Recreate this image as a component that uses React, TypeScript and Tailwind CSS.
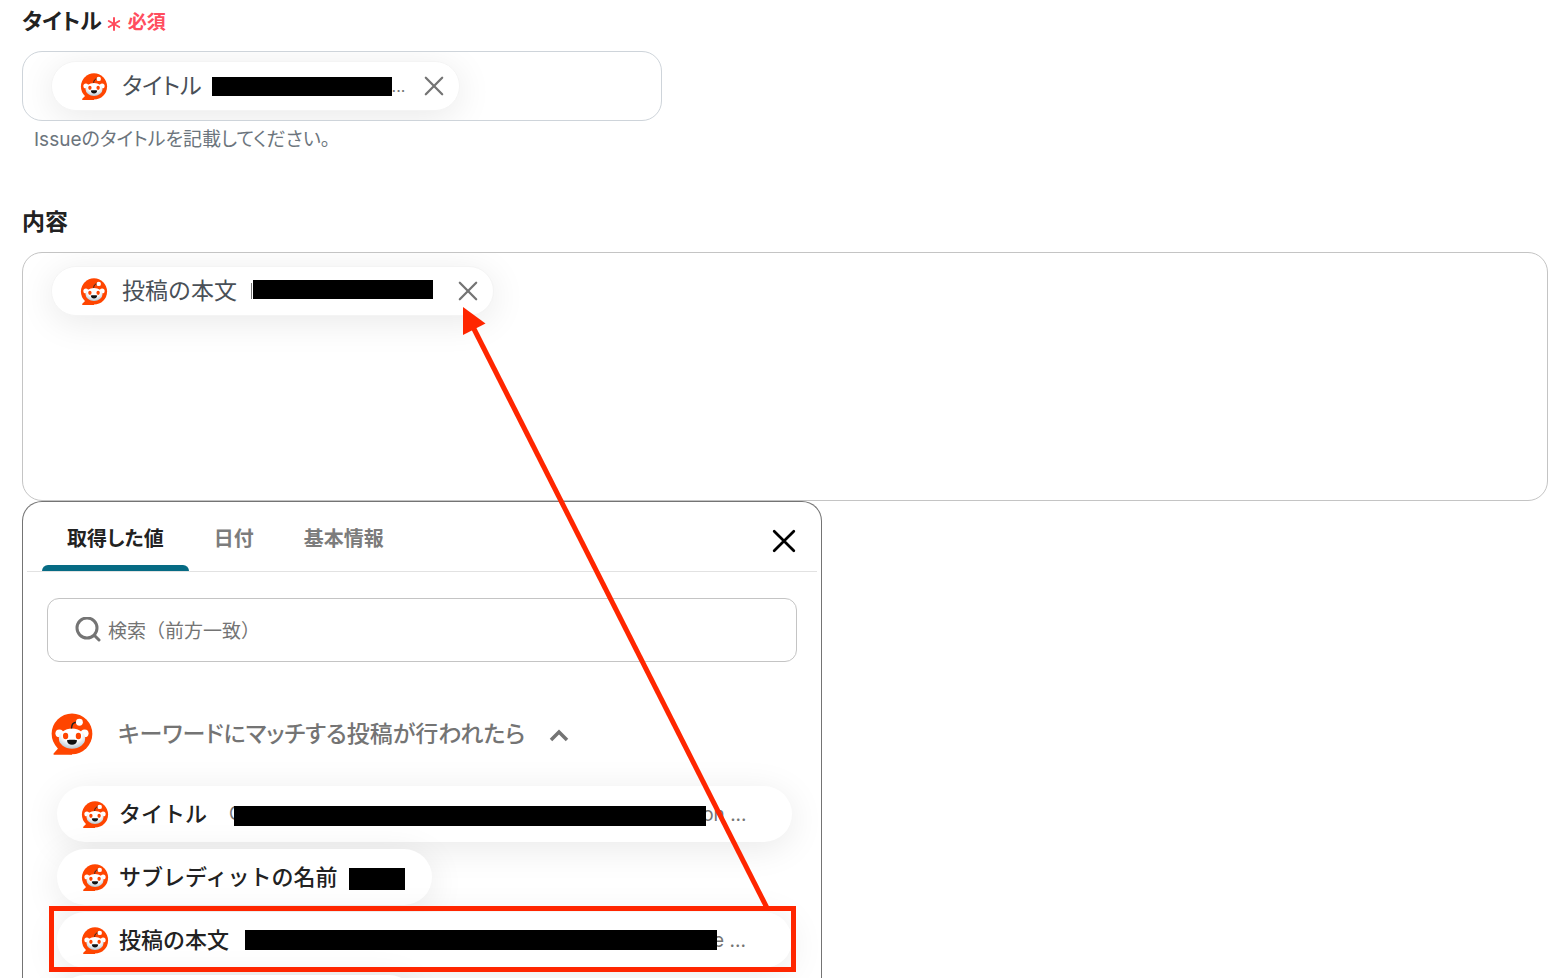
import { useState } from 'react'
import { Asterisk } from 'lucide-react'
import clsx from 'clsx'

interface IconProps {
  className?: string
}

interface ValueRow {
  label: string
  head?: string
  tail?: string
  chipClass: string
  barClass: string
}

const tabs = ['取得した値', '日付', '基本情報']

const rows: ValueRow[] = [
  {
    label: 'タイトル',
    head: 'C',
    tail: 'on ...',
    chipClass: 'w-[735px]',
    barClass: '-ml-2 mt-1 h-5 w-[472px]',
  },
  {
    label: 'サブレディットの名前',
    chipClass: 'w-[375px]',
    barClass: 'ml-3 mt-1 h-[22px] w-14',
  },
  {
    label: '投稿の本文',
    tail: 'e ...',
    chipClass: 'w-[735px]',
    barClass: 'ml-4 h-5 w-[472px]',
  },
]

function RedditIcon({ className }: IconProps) {
  return (
    <svg viewBox="0 0 125 128" className={className} aria-hidden="true">
      <defs>
        <radialGradient id="face" cx="50%" cy="30%" r="75%">
          <stop offset="0.5" stopColor="#ffffff" />
          <stop offset="1" stopColor="#a9bdc9" />
        </radialGradient>
      </defs>
      <circle cx="62.500" cy="63.500" r="62" fill="#ff4500" />
      <path d="M62.500 127.500H9c-3 0-4-3-2-5l13-14L62.500 90Z" fill="#ff4500" />
      <circle cx="24" cy="62" r="12" fill="#fff" />
      <circle cx="101" cy="62" r="12" fill="#fff" />
      <ellipse cx="62.500" cy="78" rx="40" ry="31" fill="url(#face)" />
      <path d="M61 47C61 34 67 28 77 28" fill="none" stroke="#222" strokeWidth="4.500" />
      <circle cx="85" cy="28" r="10.500" fill="#fff" />
      <ellipse cx="43" cy="70" rx="8" ry="10" fill="#ff4500" />
      <ellipse cx="82" cy="70" rx="8" ry="10" fill="#ff4500" />
      <path d="M47 83c10-2 22-2 31 0c-1 9-7 14-15.500 14S48 92 47 83Z" fill="#111" />
    </svg>
  )
}

function CloseIcon({ className }: IconProps) {
  return (
    <svg viewBox="0 0 22 22" className={className} fill="none" stroke="currentColor" strokeWidth="2.500" strokeLinecap="round" aria-hidden="true">
      <path d="M2 2l18 18M20 2L2 20" />
    </svg>
  )
}

function SearchIcon() {
  return (
    <svg viewBox="0 0 26 26" className="size-[26px] shrink-0" fill="none" stroke="#747474" strokeWidth="3" strokeLinecap="round" aria-hidden="true">
      <circle cx="12" cy="11" r="10" />
      <path d="M19.500 18.500l4.500 4.500" />
    </svg>
  )
}

interface TokenProps {
  label: string
  className: string
  children: React.ReactNode
}

function Token({ label, className, children }: TokenProps) {
  return (
    <div
      className={clsx(
        'flex h-[50px] shrink-0 items-center rounded-full border border-[#f4f4f4] bg-white pl-7 shadow-[0_6px_36px_rgba(0,0,0,0.09)]',
        className,
      )}
    >
      <RedditIcon className="h-[27px] w-7 shrink-0" />
      <span className="ml-3.5 text-[23px] leading-8 whitespace-nowrap text-[#495057]">{label}</span>
      {children}
      <button type="button" aria-label={`${label}を削除`} className="mr-[15px] ml-auto">
        <CloseIcon className="size-5 text-[#747474]" />
      </button>
    </div>
  )
}

function ValuePicker() {
  const [active, setActive] = useState(0)
  const [open, setOpen] = useState(true)

  return (
    <section className="max-w-[800px] rounded-t-[20px] border border-b-0 border-[#747474] bg-white pb-10">
      <div className="mx-1 flex h-[70px] items-stretch border-b border-[#e2e2e2] pr-[21px] pl-[15px]">
        <div role="tablist" className="flex [font-feature-settings:'palt']">
          {tabs.map((tab, idx) => (
            <button
              key={tab}
              type="button"
              role="tab"
              aria-selected={idx === active}
              onClick={() => setActive(idx)}
              className="flex flex-col justify-end"
            >
              <span
                className={clsx(
                  'px-[25px] pb-2.5 text-xl leading-8 font-bold',
                  idx === active ? 'text-[#222222]' : 'text-[#7c7c7c]',
                )}
              >
                {tab}
              </span>
              <span className={clsx('h-1.5 w-full rounded-t-md', idx === active && 'bg-[#066b84]')} />
            </button>
          ))}
        </div>
        <button type="button" aria-label="閉じる" className="mt-2 ml-auto">
          <CloseIcon className="size-6 text-black" />
        </button>
      </div>

      <div className="px-6 pt-[26px]">
        <label className="flex h-16 items-center gap-[7px] rounded-xl border border-[#c4c4c4] px-[27px]">
          <SearchIcon />
          <input
            type="text"
            aria-label="検索"
            placeholder="検索（前方一致）"
            className="min-w-0 flex-1 pt-1 text-[19px] leading-8 outline-none placeholder:text-[#747474]"
          />
        </label>

        <button
          type="button"
          aria-expanded={open}
          onClick={() => setOpen(!open)}
          className="mt-[51px] ml-1 flex items-center"
        >
          <RedditIcon className="size-[42px]" />
          <span className="ml-[25px] text-[23px] leading-8 font-medium text-[#747474] [font-feature-settings:'palt']">
            キーワードにマッチする投稿が行われたら
          </span>
          <svg viewBox="0 0 20 14" className="mt-0.5 ml-6 h-3.5 w-5" fill="none" stroke="#747474" strokeWidth="3.500" aria-hidden="true">
            <path d="M2 12l8-8 8 8" />
          </svg>
        </button>

        {open && (
          <ul className="mt-[31px] ml-2.5 flex flex-col gap-[7px]">
            {rows.map((row) => (
              <li key={row.label}>
                <button
                  type="button"
                  className={clsx(
                    'flex h-14 max-w-full items-center rounded-full bg-white pl-6 text-left shadow-[0_6px_36px_rgba(0,0,0,0.09)]',
                    row.chipClass,
                  )}
                >
                  <RedditIcon className="h-[27px] w-7 shrink-0" />
                  <span className="ml-2.5 text-[22px] leading-8 font-medium whitespace-nowrap text-[#222222]">
                    {row.label}
                  </span>
                  {row.head && <span className="ml-[22px] text-lg text-[#747474]">{row.head}</span>}
                  <span className={clsx('z-10 shrink-0 bg-black', row.barClass)} />
                  {row.tail && (
                    <span className="-ml-1 pt-0.5 text-[19px] whitespace-nowrap text-[#747474]">{row.tail}</span>
                  )}
                </button>
              </li>
            ))}
            <li>
              <button
                type="button"
                aria-label="投稿者"
                className="h-14 w-[360px] rounded-full bg-white shadow-[0_6px_36px_rgba(0,0,0,0.09)]"
              />
            </li>
          </ul>
        )}
      </div>
    </section>
  )
}

// Pointer from the picked value up to the field it lands in
function Callout() {
  return (
    <svg className="pointer-events-none absolute top-0 left-0 z-20" width="840" height="978" aria-hidden="true">
      <rect x="51.500" y="908.500" width="742" height="61" fill="none" stroke="#ff2600" strokeWidth="5" />
      <path d="M767 908L472 325" stroke="#ff2600" strokeWidth="5" />
      <path d="M463 307L485.500 323.500L463 335Z" fill="#ff2600" />
    </svg>
  )
}

export default function App() {
  return (
    <main className="relative h-screen overflow-hidden bg-white pr-[18px] pl-[22px] font-['Inter','Noto_Sans_CJK_JP',sans-serif]">
      <div className="flex items-center pt-[3px] [font-feature-settings:'palt']">
        <label htmlFor="issue-title" className="text-[22px] leading-8 font-bold text-[#222222]">
          タイトル
        </label>
        <Asterisk size={24} className="mt-1.5 text-[#ff4d5e]" />
        <span className="ml-0.5 pt-1 text-[19px] leading-8 font-bold text-[#ff4d5e]">必須</span>
      </div>
      <div className="mt-3 flex h-[70px] max-w-[640px] items-center overflow-hidden rounded-[20px] border border-[#ced4da] px-7">
        <Token label="タイトル" className="w-[409px] [font-feature-settings:'palt']">
          <span className="ml-2.5 h-[19px] w-[180px] bg-black" />
          <span className="text-base text-[#747474]">...</span>
        </Token>
        <input id="issue-title" type="text" className="min-w-0 flex-1 outline-none" />
      </div>
      <p className="mt-1 ml-3 text-[19px] leading-[30px] text-[#6c757d] [font-feature-settings:'palt']">
        Issueのタイトルを記載してください。
      </p>

      <label htmlFor="issue-body" className="mt-[51px] block text-[23px] leading-8 font-bold text-[#222222]">
        内容
      </label>
      <div className="mt-[14px] flex h-[249px] items-start overflow-hidden rounded-[20px] border border-[#c4c4c4] px-7 pt-[13px]">
        <Token label="投稿の本文" className="w-[443px]">
          <span className="ml-3.5 h-4 w-px bg-[#747474]" />
          <span className="mb-1 ml-px h-[19px] w-[180px] bg-black" />
        </Token>
        <textarea id="issue-body" className="h-full min-w-0 flex-1 resize-none outline-none" />
      </div>

      <ValuePicker />
      <Callout />
    </main>
  )
}
